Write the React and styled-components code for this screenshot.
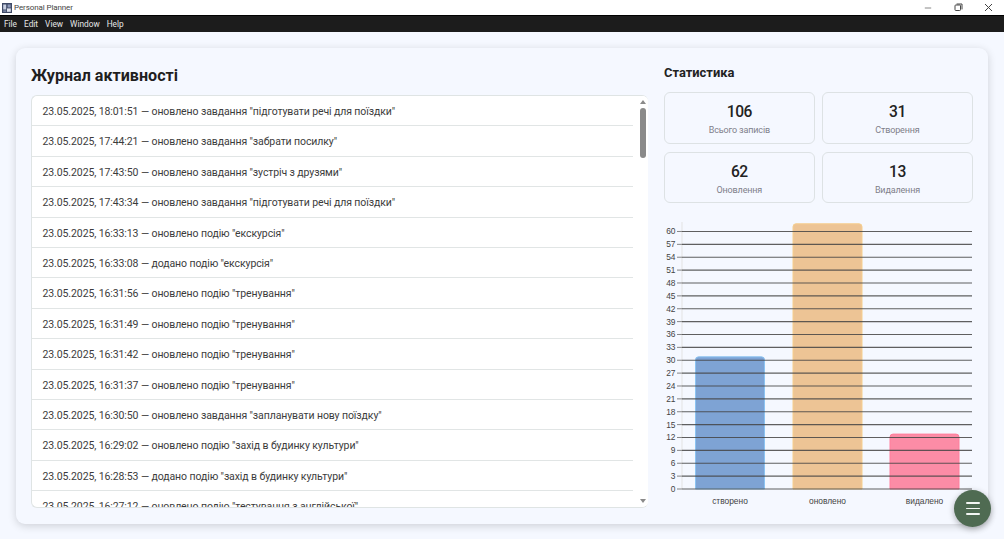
import React from "react";
import styled, { createGlobalStyle } from "styled-components";

const Global = createGlobalStyle`
  html, body { margin: 0; padding: 0; height: 100%; overflow: hidden; background: #f5f8ff; }
  body { font-family: Roboto, "Open Sans", "Liberation Sans", sans-serif; }
  * { box-sizing: border-box; }
`;

const Shell = styled.div`
  width: 1004px; height: 539px; display: flex; flex-direction: column; position: relative; overflow: hidden;
`;
const TitleBar = styled.header`
  height: 15px; background: #fff; display: flex; align-items: center; padding-left: 1.5px; flex: none;
`;
const AppName = styled.span`
  font-size: 8px; letter-spacing: -.1px; color: #444; margin-left: 2.5px; flex: 1;
`;
const WinButton = styled.span`
  width: 30.5px; height: 15px; display: flex; align-items: center; justify-content: center; color: #555;
`;
const MenuBar = styled.nav`
  height: 17px; background: #1c1c1c; border-top: 1px solid #000; display: flex; align-items: center; gap: 7px; padding-left: 4px; flex: none;
`;
const MenuItem = styled.span`
  font-size: 8.3px; color: #e6e6e6;
`;
const Main = styled.main`
  flex: 1; padding: 16px 16px 15px; min-height: 0; display: flex;
`;
const Card = styled.section`
  flex: 1; background: #f5f8ff; border-radius: 9px; box-shadow: 0 2px 8px rgba(0,0,0,.16);
  padding: 16px 15.5px 16px 15px; display: grid; grid-template-columns: 617px 308.7px; column-gap: 16px; min-height: 0;
`;
const LogCol = styled.div`
  display: flex; flex-direction: column; min-height: 0;
`;
const Heading = styled.h1`
  margin: 0; padding-top: 1px; font-size: 16.1px; line-height: 22px; font-weight: 700; color: #1f1f1f; height: 31px; flex: none;
`;
const ListBox = styled.div`
  height: 413px; flex: none; display: flex; background: #fff; border: 1px solid #dfe4e4; border-right: none; border-radius: 6px; overflow: hidden;
`;
const List = styled.ul`
  margin: 0; padding: 0; list-style: none; flex: 1; overflow: hidden; min-width: 0;
`;
const Row = styled.li`
  height: 30.4px; padding: 1.6px 0 0 10.5px; display: flex; align-items: center; font-size: 10.5px; letter-spacing: -.1px; color: #3c3c3c; border-bottom: 1.4px solid #e1e5e5; white-space: nowrap; flex: none;
`;
const Scrollbar = styled.div`
  width: 15px; flex: none; background: #fff; display: flex; flex-direction: column; align-items: flex-end; padding: 4px 0 4px 0;
`;
const ScrollSlot = styled.div`
  width: 10px; flex: 1; display: flex; flex-direction: column; align-items: center;
`;
const ArrowUp = styled.div`
  width: 0; height: 0; border-left: 3px solid transparent; border-right: 3px solid transparent; border-bottom: 4px solid #8a8a8a; flex: none;
`;
const ArrowDown = styled(ArrowUp)`
  border-bottom: none; border-top: 4px solid #8a8a8a; margin-top: auto;
`;
const Thumb = styled.div`
  width: 5.5px; height: 50px; margin-top: 4px; background: #8a8a8a; border-radius: 3px; flex: none;
`;
const StatsCol = styled.div`
  display: flex; flex-direction: column; min-height: 0;
`;
const SubHeading = styled.h2`
  margin: 0; font-size: 12.9px; line-height: 18px; font-weight: 700; color: #222; height: 28px; flex: none;
`;
const StatGrid = styled.div`
  display: grid; grid-template-columns: 150.7px 150.5px; grid-auto-rows: 51.5px; column-gap: 7.5px; row-gap: 8px; flex: none;
`;
const StatCard = styled.div`
  border: 1px solid #dde2e4; border-radius: 6px; display: flex; flex-direction: column; align-items: center; padding-top: 9px;
`;
const StatValue = styled.div`
  font-size: 15.6px; letter-spacing: -.5px; line-height: 20px; font-weight: 500; color: #222;
`;
const StatLabel = styled.div`
  font-size: 9px; letter-spacing: -.15px; line-height: 14px; color: #80808a; margin-top: 1px;
`;
const ChartSvg = styled.svg`
  display: block; margin-top: 16.5px; flex: none; overflow: visible;
`;
const Fab = styled.button`
  position: absolute; left: 954px; top: 490px; width: 37px; height: 37px; border-radius: 50%; border: none; padding: 0;
  background: #4f6b52; box-shadow: 0 2px 6px rgba(0,0,0,.3); display: flex; flex-direction: column; gap: 4px; align-items: center; justify-content: center;
`;
const FabLine = styled.span`
  width: 14px; height: 1.6px; background: #f3f6f3; border-radius: 1px;
`;

const entries = [
  '23.05.2025, 18:01:51 — оновлено завдання "підготувати речі для поїздки"',
  '23.05.2025, 17:44:21 — оновлено завдання "забрати посилку"',
  '23.05.2025, 17:43:50 — оновлено завдання "зустріч з друзями"',
  '23.05.2025, 17:43:34 — оновлено завдання "підготувати речі для поїздки"',
  '23.05.2025, 16:33:13 — оновлено подію "екскурсія"',
  '23.05.2025, 16:33:08 — додано подію "екскурсія"',
  '23.05.2025, 16:31:56 — оновлено подію "тренування"',
  '23.05.2025, 16:31:49 — оновлено подію "тренування"',
  '23.05.2025, 16:31:42 — оновлено подію "тренування"',
  '23.05.2025, 16:31:37 — оновлено подію "тренування"',
  '23.05.2025, 16:30:50 — оновлено завдання "запланувати нову поїздку"',
  '23.05.2025, 16:29:02 — оновлено подію "захід в будинку культури"',
  '23.05.2025, 16:28:53 — додано подію "захід в будинку культури"',
  '23.05.2025, 16:27:12 — оновлено подію "тестування з англійської"',
];
const stats = [
  ["106", "Всього записів"],
  ["31", "Створення"],
  ["62", "Оновлення"],
  ["13", "Видалення"],
];
const bars = [
  { label: "створено", value: 31, x: 31.5, fill: "rgba(54,112,185,.62)", stroke: "#8cc4f2" },
  { label: "оновлено", value: 62, x: 129, fill: "rgba(232,164,84,.62)", stroke: "#f6cf8e" },
  { label: "видалено", value: 13, x: 226, fill: "rgba(255,99,132,.72)", stroke: "#ff7f9c" },
];

const CH = { left: 18, right: 308, zero: 269, unit: 4.292 };

function Chart() {
  const ticks = [];
  for (let v = 0; v <= 60; v += 3) ticks.push(v);
  return (
    <ChartSvg width="308" height="290" viewBox="0 0 308 290">
      <line x1={CH.left} x2={CH.left} y1="2" y2={CH.zero} stroke="#e3e3e3" strokeWidth="1" />
      {bars.map((b) => {
        const h = b.value * CH.unit;
        const y = CH.zero - h + 0.9;
        return (
          <path
            key={b.label}
            d={`M${b.x} ${CH.zero}V${y + 3}Q${b.x} ${y} ${b.x + 3} ${y}H${b.x + 66}Q${b.x + 69} ${y} ${b.x + 69} ${y + 3}V${CH.zero}Z`}
            fill={b.fill}
            stroke={b.stroke}
            strokeWidth="1"
          />
        );
      })}
      {ticks.map((v) => {
        const y = CH.zero - v * CH.unit;
        return (
          <g key={v}>
            <line x1={CH.left - 5} x2={CH.left} y1={y} y2={y} stroke="#777" strokeWidth="0.9" />
            <line x1={CH.left} x2={CH.right} y1={y} y2={y} stroke="#444" strokeOpacity=".85" strokeWidth="1.1" />
            <text x={CH.left - 6.5} y={y + 3} textAnchor="end" fontFamily="'Liberation Sans', sans-serif" fontSize="8.4" fill="#444">{v}</text>
          </g>
        );
      })}
      {bars.map((b) => (
        <text key={b.label} x={b.x + 34.5} y={CH.zero + 14.5} textAnchor="middle" fontFamily="'Liberation Sans', sans-serif" fontSize="8.4" fill="#444">{b.label}</text>
      ))}
    </ChartSvg>
  );
}

export default function App() {
  return (
    <Shell>
      <Global />
      <TitleBar>
        <svg width="10" height="10" viewBox="0 0 10 10">
          <rect width="10" height="10" fill="#3f4a66" />
          <rect x="1.2" y="1.5" width="3" height="5" fill="#c8cfe0" />
          <rect x="5.6" y="1.5" width="3" height="3" fill="#8d98b8" />
          <rect x="5" y="5.4" width="3.8" height="3.4" fill="#dfe3ee" />
          <rect x="1.2" y="7.5" width="3" height="1.2" fill="#8d98b8" />
        </svg>
        <AppName>Personal Planner</AppName>
        <WinButton>
          <svg width="8" height="8" viewBox="0 0 8 8"><path d="M0.8 4H7.2" stroke="#888" strokeWidth="1" /></svg>
        </WinButton>
        <WinButton>
          <svg width="9" height="9" viewBox="0 0 9 9" fill="none" stroke="#444" strokeWidth="1"><rect x="1" y="2" width="5.5" height="5.5" rx=".8" /><path d="M2.6 1H8V6.4" /></svg>
        </WinButton>
        <WinButton>
          <svg width="9" height="9" viewBox="0 0 9 9"><path d="M1 1L8 8M8 1L1 8" stroke="#444" strokeWidth="1" /></svg>
        </WinButton>
      </TitleBar>
      <MenuBar>
        {["File", "Edit", "View", "Window", "Help"].map((m) => <MenuItem key={m}>{m}</MenuItem>)}
      </MenuBar>
      <Main>
        <Card>
          <LogCol>
            <Heading>Журнал активності</Heading>
            <ListBox>
              <List>
                {entries.map((e) => <Row key={e}>{e}</Row>)}
              </List>
              <Scrollbar>
                <ScrollSlot>
                  <ArrowUp />
                  <Thumb />
                  <ArrowDown />
                </ScrollSlot>
              </Scrollbar>
            </ListBox>
          </LogCol>
          <StatsCol>
            <SubHeading>Статистика</SubHeading>
            <StatGrid>
              {stats.map(([v, l]) => (
                <StatCard key={l}>
                  <StatValue>{v}</StatValue>
                  <StatLabel>{l}</StatLabel>
                </StatCard>
              ))}
            </StatGrid>
            <Chart />
          </StatsCol>
        </Card>
      </Main>
      <Fab aria-label="menu"><FabLine /><FabLine /><FabLine /></Fab>
    </Shell>
  );
}
